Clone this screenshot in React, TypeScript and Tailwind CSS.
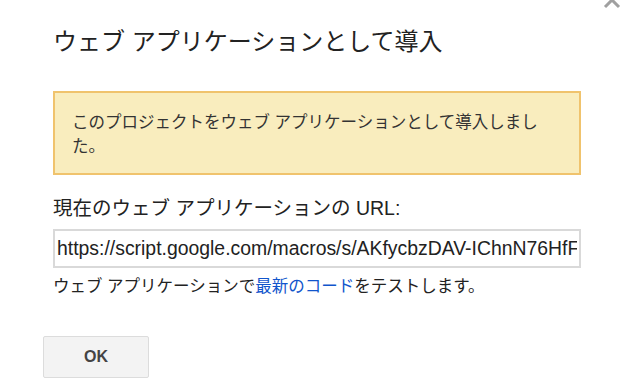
import React from 'react';

const FONT = '"Liberation Sans", "Noto Sans CJK JP", Arial, sans-serif';

export default function App() {
  const url = 'https://script.google.com/macros/s/AKfycbzDAV-IChnN76HfF1Wq0sR9pLxT2mYbK/exec';

  return (
    <div
      className="relative w-[638px] h-[392px] overflow-hidden bg-white text-[#222]"
      style={{ fontFamily: FONT }}
    >
      {/* close button, mostly scrolled off the top */}
      <svg className="absolute right-[16px] top-[-10px]" width="20" height="20" viewBox="0 0 20 20">
        <path d="M3 3 L17 17 M17 3 L3 17" stroke="#a0a0a0" strokeWidth="3" fill="none" />
      </svg>

      <div className="pl-[53px] pr-[57px] pt-[27px]">
        <h1 className="text-[24px] leading-[30px] font-normal text-[#222]">
          ウェブ アプリケーションとして導入
        </h1>

        <div className="mt-[34px] h-[84px] border-2 border-[#f0c36d] bg-[#f9edbe] pl-[17px] pr-[20px] pt-[17px] text-[16.5px] leading-[24px] text-[#333]">
          このプロジェクトをウェブ アプリケーションとして導入しました。
        </div>

        <div className="mt-[21px] text-[19.5px] leading-[24px] text-[#222]">
          現在のウェブ アプリケーションの URL:
        </div>

        <div className="mt-[9px] h-[39px] border-2 border-[#d9d9d9] bg-white overflow-hidden">
          <input
            readOnly
            value={url}
            className="w-full h-full px-[2px] text-[19.4px] text-[#222] outline-none bg-transparent"
            style={{ fontFamily: FONT }}
          />
        </div>

        <div className="mt-[7px] text-[16.5px] leading-[22px] text-[#222]">
          ウェブ アプリケーションで<span className="text-[#15c]">最新のコード</span>をテストします。
        </div>
      </div>

      <button
        className="absolute left-[43px] top-[336px] w-[106px] h-[42px] rounded-[2px] border border-[#dcdcdc] bg-[#f3f3f3] text-[16px] font-bold text-[#444]"
        style={{ fontFamily: FONT }}
      >
        OK
      </button>
    </div>
  );
}
